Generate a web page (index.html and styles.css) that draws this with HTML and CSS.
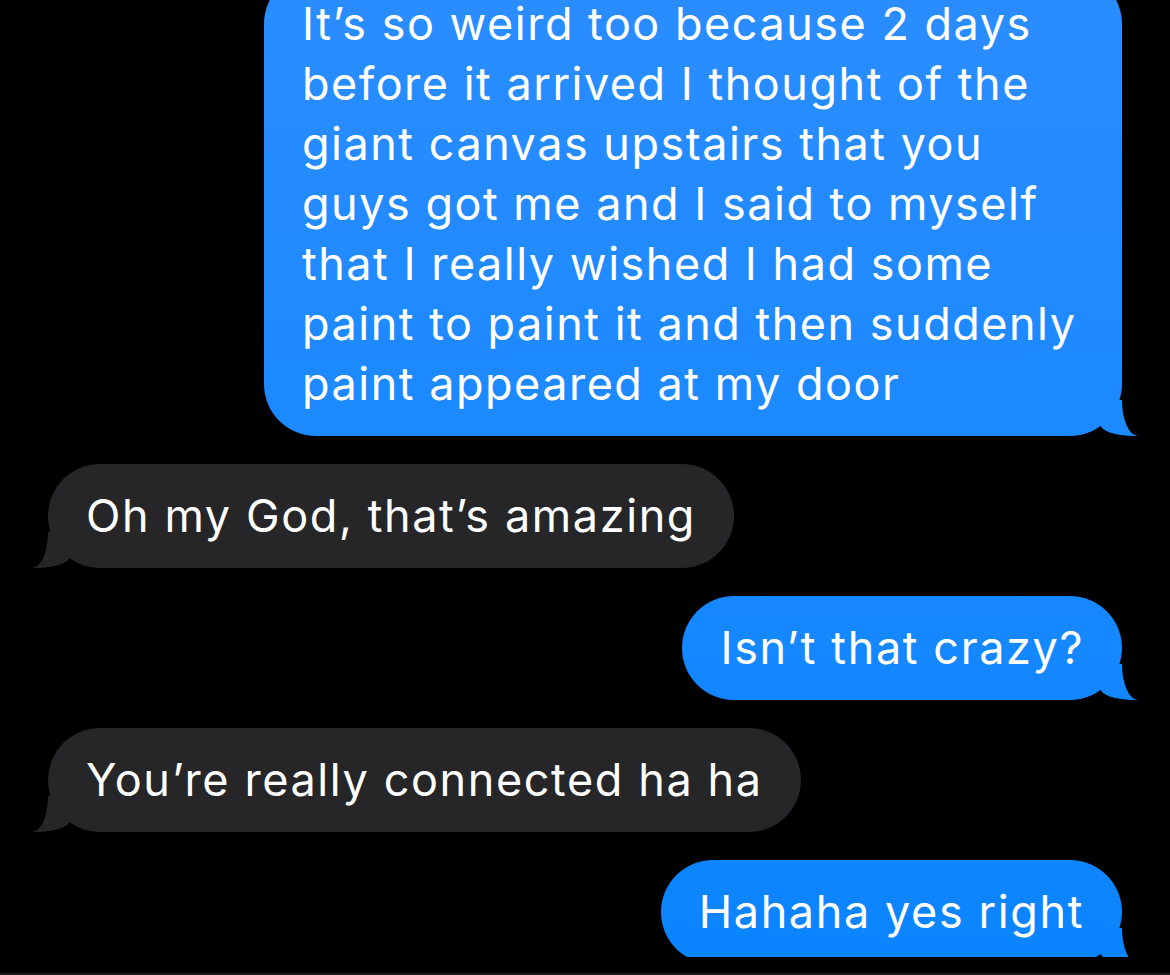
FILE: index.html
```html
<!DOCTYPE html>
<html lang="en">
<head>
    <meta charset="UTF-8">
    <meta name="viewport" content="width=device-width, initial-scale=1.0">
    <title>Messages</title>
    <link rel="stylesheet" href="styles.css">
</head>
<body>
    <div class="thread">
        <p class="msg sent long">It’s so weird too because 2 days<br>
            before it arrived I thought of the<br>
            giant canvas upstairs that you<br>
            guys got me and I said to myself<br>
            that I really wished I had some<br>
            paint to paint it and then suddenly<br>
            paint appeared at my door</p>
        <p class="msg received">Oh my God, that’s amazing</p>
        <p class="msg sent">Isn’t that crazy?</p>
        <p class="msg received">You’re really connected ha ha</p>
        <p class="msg sent">Hahaha yes right</p>
    </div>

    <div class="composer-edge"></div>
</body>
</html>
```

FILE: styles.css
```css
body {
    margin: 0;
    background-color: #000;
    font-family: Inter, "Noto Sans", sans-serif;
    overflow: hidden;
    height: 975px;
}

.thread {
    display: flex;
    flex-direction: column;
    gap: 28px;
    padding: 0 48px;
    margin-top: -28px;
}

.msg {
    position: relative;
    margin: 0;
    padding: 22px 38px;
    font-size: 45px;
    line-height: 60px;
    letter-spacing: 1.6px;
    color: #fff;
    border-radius: 52px;
    white-space: nowrap;
}

/* tail pieces */
.msg::before,
.msg::after {
    content: "";
    position: absolute;
    bottom: 0;
    height: 36px;
}

.sent {
    align-self: flex-end;
    background: linear-gradient(#2a8dff, #0a84ff) fixed;
}

.sent.long {
    width: 782px;
    letter-spacing: 1.5px;
}

.sent::before {
    right: -28px;
    width: 50px;
    background: linear-gradient(#2a8dff, #0a84ff) fixed;
    border-bottom-left-radius: 34px 12px;
}

.sent::after {
    right: -56px;
    width: 56px;
    background-color: #000;
    border-bottom-left-radius: 16px 36px;
}

.received {
    align-self: flex-start;
    background-color: #262628;
}

.received::before {
    left: -28px;
    width: 50px;
    background-color: #262628;
    border-bottom-right-radius: 34px 12px;
}

.received::after {
    left: -56px;
    width: 56px;
    background-color: #000;
    border-bottom-right-radius: 16px 36px;
}

.composer-edge {
    position: fixed;
    left: 0;
    right: 0;
    bottom: 0;
    height: 16px;
    background-color: #000;
    border-bottom: 2px solid #1c1c1e;
}
```
